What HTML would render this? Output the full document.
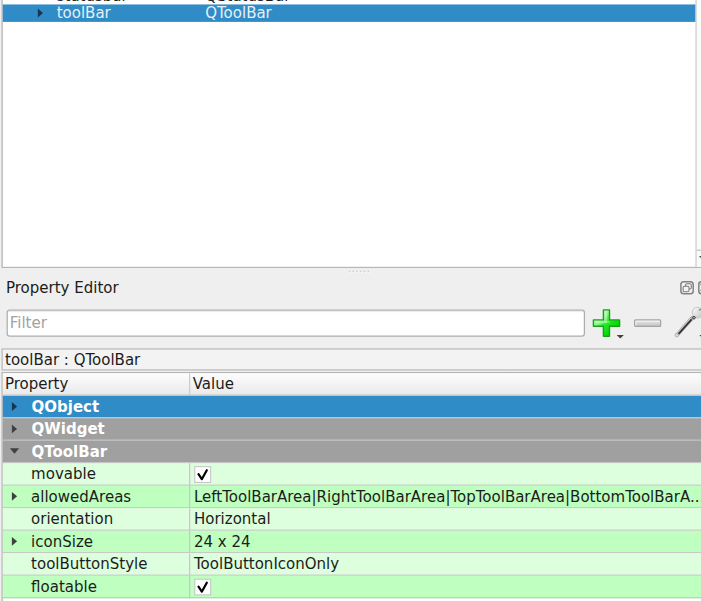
<!DOCTYPE html>
<html><head><meta charset="utf-8"><title>Property Editor</title>
<style>
html,body{margin:0;padding:0;}
body{width:701px;height:601px;overflow:hidden;background:#efefef;font-family:"DejaVu Sans","Liberation Sans",sans-serif;font-size:15px;color:#1c1c1c;position:relative;}
#bg{position:absolute;left:0;top:0;}
.t{position:absolute;white-space:nowrap;line-height:18px;height:18px;}
</style></head><body>
<svg id="bg" width="701" height="601" viewBox="0 0 701 601">
<rect x="1.5" y="-10" width="720" height="278" fill="#b6b6b6" />
<rect x="2.8" y="-10" width="720" height="276.8" fill="#ffffff" />
<rect x="2.8" y="4.45" width="692.7" height="17.45" fill="#308cc6" />
<rect x="695.5" y="-10" width="1.25" height="276.8" fill="#c4c4c4" />
<rect x="696.75" y="-10" width="10" height="276.8" fill="#fbfbfb" />
<rect x="696.75" y="249.6" width="10" height="1.25" fill="#c4c4c4" />
<path d="M698.9 255.9 L704 255.9 L701.45 258.9 Z" fill="#555"/>
<path d="M37.8 8.6 L43 13 L37.8 17.4 Z" fill="#18374f"/>
<rect x="348.9" y="270.7" width="1.25" height="1.25" fill="#c9c9c9" />
<rect x="350.15" y="271.95" width="1.25" height="1.25" fill="#fafafa" />
<rect x="352.65" y="270.7" width="1.25" height="1.25" fill="#c9c9c9" />
<rect x="353.9" y="271.95" width="1.25" height="1.25" fill="#fafafa" />
<rect x="356.4" y="270.7" width="1.25" height="1.25" fill="#c9c9c9" />
<rect x="357.65" y="271.95" width="1.25" height="1.25" fill="#fafafa" />
<rect x="360.15" y="270.7" width="1.25" height="1.25" fill="#c9c9c9" />
<rect x="361.4" y="271.95" width="1.25" height="1.25" fill="#fafafa" />
<rect x="363.9" y="270.7" width="1.25" height="1.25" fill="#c9c9c9" />
<rect x="365.15" y="271.95" width="1.25" height="1.25" fill="#fafafa" />
<rect x="367.65" y="270.7" width="1.25" height="1.25" fill="#c9c9c9" />
<rect x="368.9" y="271.95" width="1.25" height="1.25" fill="#fafafa" />
<rect x="680.9" y="281.8" width="12.3" height="12.0" rx="2.8" fill="#f1f1f1" stroke="#85817e" stroke-width="1.5"/>
<rect x="685.5" y="283.8" width="5.8" height="5.2" rx="1.4" fill="none" stroke="#7f7b78" stroke-width="1.05"/>
<rect x="683.1" y="286.3" width="5.9" height="5.4" rx="1.4" fill="#f1f1f1" stroke="#7f7b78" stroke-width="1.05"/>
<rect x="698.8" y="281.8" width="12.3" height="12.0" rx="2.8" fill="#f1f1f1" stroke="#85817e" stroke-width="1.5"/>
<path d="M700.6 283.8 L703.5 287.3 M700.6 291 L703.5 287.5" stroke="#7f7b78" stroke-width="1.3" fill="none"/>
<rect x="7.2" y="310.2" width="577.2" height="26.0" rx="2.6" fill="#ffffff" stroke="#adadad" stroke-width="1.25"/>
<rect x="8.6" y="310.9" width="574.4" height="1.2" fill="#ececec"/>
<defs>
<linearGradient id="gp" gradientUnits="userSpaceOnUse" x1="594" y1="311" x2="619" y2="336"><stop offset="0" stop-color="#d2ffd2"/><stop offset="0.33" stop-color="#8cf58c"/><stop offset="0.5" stop-color="#22e822"/><stop offset="0.75" stop-color="#05d805"/><stop offset="1" stop-color="#12c812"/></linearGradient>
<linearGradient id="gm" x1="0" y1="0" x2="0" y2="1"><stop offset="0" stop-color="#e6e6e6"/><stop offset="1" stop-color="#c4c4c4"/></linearGradient>
<linearGradient id="gh" x1="0" y1="0" x2="0" y2="1"><stop offset="0" stop-color="#fdfdfd"/><stop offset="1" stop-color="#e9e9e9"/></linearGradient>
<linearGradient id="gw" gradientUnits="userSpaceOnUse" x1="692" y1="308" x2="701" y2="318"><stop offset="0" stop-color="#fafafa"/><stop offset="1" stop-color="#c9c9c9"/></linearGradient>
</defs>
<path d="M603.4 309.9 H609.5 V319.9 H619.6 V326.3 H609.5 V336.3 H603.4 V326.3 H593.4 V319.9 H603.4 Z" fill="url(#gp)" stroke="#16a416" stroke-width="1.4" stroke-linejoin="round"/>
<rect x="594.4" y="320.9" width="15" height="2.3" fill="#fff" opacity="0.3"/>
<rect x="604.4" y="311" width="2.4" height="12" fill="#fff" opacity="0.3"/>
<path d="M616.7 334.9 L623.8 334.9 L620.25 338.5 Z" fill="#404040"/>
<rect x="634.6" y="319.9" width="26.1" height="6.5" rx="1" fill="url(#gm)" stroke="#a4a4a4" stroke-width="1.2"/>
<path d="M635.9 325.4 V321.2 H659.6" stroke="#ffffff" stroke-width="1" opacity="0.75" fill="none"/>
<path d="M677.0 335.0 L692 318.2" stroke="#a9a9a9" stroke-width="4.0" stroke-linecap="round"/>
<path d="M676.9 333.7 L690.6 318.3" stroke="#d6d6d6" stroke-width="1.0" stroke-linecap="round"/>
<path d="M678.6 333.9 L691.6 319.4" stroke="#353535" stroke-width="1.7" stroke-linecap="butt"/>
<circle cx="676.8" cy="335.2" r="1.7" fill="#dedede" stroke="#a9a9a9" stroke-width="0.8"/>
<circle cx="697.6" cy="312.6" r="5.4" fill="url(#gw)" stroke="#c4c4c4" stroke-width="1"/>
<path d="M698.8 310.4 L702 308.6" stroke="#8f8f8f" stroke-width="1.6"/>
<circle cx="694" cy="317.7" r="1.25" fill="#d8d8d8" stroke="#303030" stroke-width="1.0"/>
<path d="M699.4 334.9 L703 334.9 L701.2 336.9 Z" fill="#404040"/>
<rect x="1.5" y="348.3" width="720" height="22.3" fill="#bcbcbc" />
<rect x="2.8" y="349.6" width="720" height="19.7" fill="#f3f3f3" />
<rect x="1.5" y="372" width="720" height="260" fill="#b4b4b4" />
<rect x="2.8" y="373.3" width="720" height="260" fill="#ffffff" />
<rect x="2.8" y="373.3" width="720" height="21.7" fill="url(#gh)" />
<rect x="189" y="373.3" width="1.25" height="21.7" fill="#cccccc" />
<rect x="2.8" y="394.5" width="720" height="1.2" fill="#c6c6c6" />
<rect x="2.8" y="395.8" width="720" height="22.5" fill="#308cc6" />
<rect x="2.8" y="417.05" width="720" height="1.25" fill="#c8c8c8" />
<rect x="2.8" y="418.3" width="720" height="22.5" fill="#a0a0a0" />
<rect x="2.8" y="439.55" width="720" height="1.25" fill="#c8c8c8" />
<rect x="2.8" y="440.8" width="720" height="22.5" fill="#a0a0a0" />
<rect x="2.8" y="462.05" width="720" height="1.25" fill="#c8c8c8" />
<rect x="2.8" y="463.3" width="720" height="22.5" fill="#deffde" />
<rect x="2.8" y="484.55" width="720" height="1.25" fill="#c8c8c8" />
<rect x="189" y="463.3" width="1.25" height="22.5" fill="#c8c8c8" />
<rect x="2.8" y="485.8" width="720" height="22.5" fill="#bfffbf" />
<rect x="2.8" y="507.05" width="720" height="1.25" fill="#c8c8c8" />
<rect x="189" y="485.8" width="1.25" height="22.5" fill="#c8c8c8" />
<rect x="2.8" y="508.3" width="720" height="22.5" fill="#deffde" />
<rect x="2.8" y="529.55" width="720" height="1.25" fill="#c8c8c8" />
<rect x="189" y="508.3" width="1.25" height="22.5" fill="#c8c8c8" />
<rect x="2.8" y="530.8" width="720" height="22.5" fill="#bfffbf" />
<rect x="2.8" y="552.05" width="720" height="1.25" fill="#c8c8c8" />
<rect x="189" y="530.8" width="1.25" height="22.5" fill="#c8c8c8" />
<rect x="2.8" y="553.3" width="720" height="22.5" fill="#deffde" />
<rect x="2.8" y="574.55" width="720" height="1.25" fill="#c8c8c8" />
<rect x="189" y="553.3" width="1.25" height="22.5" fill="#c8c8c8" />
<rect x="2.8" y="575.8" width="720" height="22.5" fill="#bfffbf" />
<rect x="2.8" y="597.05" width="720" height="1.25" fill="#c8c8c8" />
<rect x="189" y="575.8" width="1.25" height="22.5" fill="#c8c8c8" />
<path d="M11.9 402.1 L17.1 406.5 L11.9 410.9 Z" fill="#18374f"/>
<path d="M11.9 424.5 L17.1 428.9 L11.9 433.3 Z" fill="#404040"/>
<path d="M11.9 491.9 L17.1 496.3 L11.9 500.7 Z" fill="#404040"/>
<path d="M11.9 536.9 L17.1 541.3 L11.9 545.7 Z" fill="#404040"/>
<path d="M9.9 448.2 L19.1 448.2 L14.5 453.8 Z" fill="#404040"/>
<rect x="194.8" y="466.7" width="15.9" height="15.7" fill="#ffffff" stroke="#c2c2c2" stroke-width="1"/>
<path d="M198.5 474.2 L201.8 479.2 L206.8 470.2" fill="none" stroke="#000" stroke-width="2.2" stroke-linecap="round" stroke-linejoin="round"/>
<rect x="194.8" y="579.2" width="15.9" height="15.7" fill="#ffffff" stroke="#c2c2c2" stroke-width="1"/>
<path d="M198.5 586.7 L201.8 591.7 L206.8 582.7" fill="none" stroke="#000" stroke-width="2.2" stroke-linecap="round" stroke-linejoin="round"/>
</svg>
<div class="t" style="left:56.7px;top:-13px;">statusbar</div>
<div class="t" style="left:205.2px;top:-13px;">QStatusBar</div>
<div class="t" style="left:56.7px;top:4px;color:#e6f0f8;">toolBar</div>
<div class="t" style="left:205.2px;top:4px;color:#e6f0f8;">QToolBar</div>
<div class="t" style="left:6px;top:279px;">Property Editor</div>
<div class="t" style="left:9.7px;top:314px;color:#a2a2a2;">Filter</div>
<div class="t" style="left:5px;top:351px;">toolBar : QToolBar</div>
<div class="t" style="left:4.9px;top:375px;">Property</div>
<div class="t" style="left:192.7px;top:375px;">Value</div>
<div class="t" style="left:31.5px;top:398px;color:#fff;font-weight:bold;">QObject</div>
<div class="t" style="left:31.5px;top:420px;color:#fff;font-weight:bold;">QWidget</div>
<div class="t" style="left:31.5px;top:443px;color:#fff;font-weight:bold;">QToolBar</div>
<div class="t" style="left:31.1px;top:465px;">movable</div>
<div class="t" style="left:31.1px;top:488px;">allowedAreas</div>
<div class="t" style="left:194px;top:488px;">LeftToolBarArea|RightToolBarArea|TopToolBarArea|BottomToolBarA...</div>
<div class="t" style="left:31.1px;top:510px;">orientation</div>
<div class="t" style="left:194px;top:510px;">Horizontal</div>
<div class="t" style="left:31.1px;top:533px;">iconSize</div>
<div class="t" style="left:194px;top:533px;">24 x 24</div>
<div class="t" style="left:31.1px;top:555px;">toolButtonStyle</div>
<div class="t" style="left:194px;top:555px;">ToolButtonIconOnly</div>
<div class="t" style="left:31.1px;top:578px;">floatable</div>
</body></html>
